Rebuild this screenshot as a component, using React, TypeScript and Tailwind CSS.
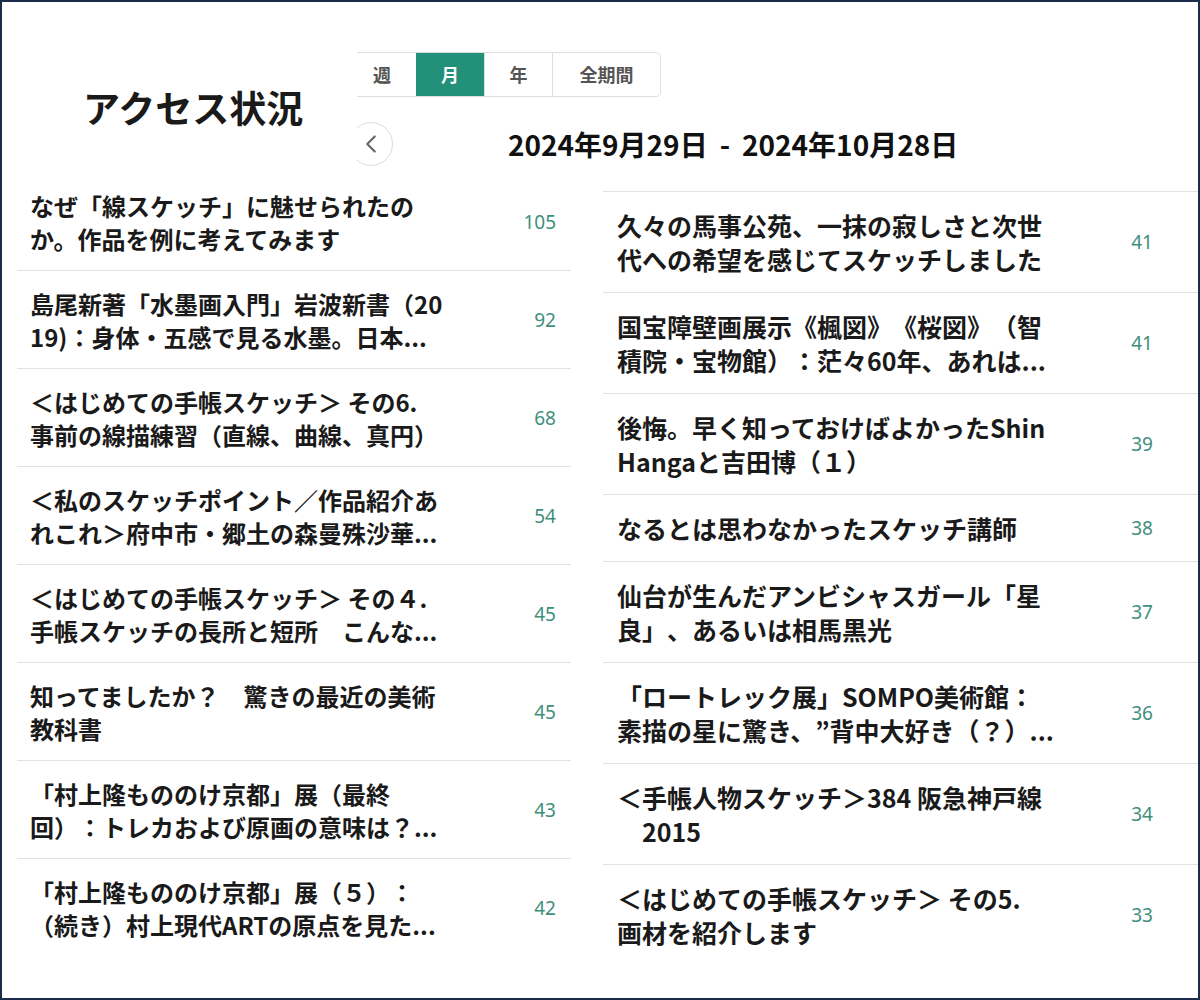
import { ChevronLeft } from "lucide-react";

type Item = { lines: string[]; count: number };

const leftItems: Item[] = [
    { lines: ["なぜ「線スケッチ」に魅せられたの", "か。作品を例に考えてみます"], count: 105 },
    { lines: ["島尾新著「水墨画入門」岩波新書（20", "19)：身体・五感で見る水墨。日本..."], count: 92 },
    { lines: ["＜はじめての手帳スケッチ＞ その6.", "事前の線描練習（直線、曲線、真円）"], count: 68 },
    { lines: ["＜私のスケッチポイント／作品紹介あ", "れこれ＞府中市・郷土の森曼殊沙華..."], count: 54 },
    { lines: ["＜はじめての手帳スケッチ＞ その４.", "手帳スケッチの長所と短所　こんな..."], count: 45 },
    { lines: ["知ってましたか？　驚きの最近の美術", "教科書"], count: 45 },
    { lines: ["「村上隆もののけ京都」展（最終", "回）：トレカおよび原画の意味は？..."], count: 43 },
    { lines: ["「村上隆もののけ京都」展（５）：", "（続き）村上現代ARTの原点を見た..."], count: 42 },
];

const rightItems: Item[] = [
    { lines: ["久々の馬事公苑、一抹の寂しさと次世", "代への希望を感じてスケッチしました"], count: 41 },
    { lines: ["国宝障壁画展示《楓図》《桜図》（智", "積院・宝物館）：茫々60年、あれは..."], count: 41 },
    { lines: ["後悔。早く知っておけばよかったShin", "Hangaと吉田博（１）"], count: 39 },
    { lines: ["なるとは思わなかったスケッチ講師"], count: 38 },
    { lines: ["仙台が生んだアンビシャスガール「星", "良」、あるいは相馬黒光"], count: 37 },
    { lines: ["「ロートレック展」SOMPO美術館：", "素描の星に驚き、”背中大好き（？）..."], count: 36 },
    { lines: ["＜手帳人物スケッチ＞384 阪急神戸線", "　2015"], count: 34 },
    { lines: ["＜はじめての手帳スケッチ＞ その5.", "画材を紹介します"], count: 33 },
];

const tabs = [
    { label: "週", w: "w-[68px]" },
    { label: "月", w: "w-[68px]" },
    { label: "年", w: "w-[68px]" },
    { label: "全期間", w: "w-[108px]" },
];

function App() {
    return (
        <div className="w-[1200px] h-[1000px] border-2 border-[#1c2b4a] bg-white overflow-hidden font-['Noto_Sans_CJK_JP','Noto_Sans',sans-serif] text-[#1a1a1a] [text-spacing-trim:space-all]">
            {/* header */}
            <div className="h-[171px] flex">
                <div className="w-[355px] shrink-0 pl-[81px] pt-[87px]">
                    <h1 className="text-[37px] leading-[37px] font-bold">アクセス状況</h1>
                </div>
                <div className="flex-1 overflow-hidden">
                    <div className="flex -ml-[10px] mt-[50px] w-fit border border-[#dedede] rounded-r-[5px] h-[45px]">
                        {tabs.map((t, i) => (
                            <div
                                key={t.label}
                                className={`${t.w} flex items-center justify-center text-[18px] font-bold ${i === 1 ? "bg-[#23907a] text-white" : "text-[#555]"} ${i > 1 ? "border-l border-[#dedede]" : ""}`}
                            >
                                {t.label}
                            </div>
                        ))}
                    </div>
                    <div className="flex items-center mt-[25px] -ml-[8px]">
                        <div className="w-[44px] h-[44px] rounded-full border border-[#dcdcdc] flex items-center justify-center text-[#666]">
                            <ChevronLeft size={30} strokeWidth={1.7} />
                        </div>
                        <div className="ml-[115px] text-[28px] leading-[36px] font-bold text-[#111] flex">
                            <span>2024年9月29日</span>
                            <span className="mx-[12px]">-</span>
                            <span>2024年10月28日</span>
                        </div>
                    </div>
                </div>
            </div>

            {/* lists */}
            <div className="flex">
                <div className="ml-[15px] w-[554px] shrink-0">
                    {leftItems.map((it, i) => (
                        <div
                            key={i}
                            className={`flex items-center pl-[13px] pr-[15px] pt-[16px] pb-[15px] ${i < leftItems.length - 1 ? "border-b border-[#e2e2e2]" : ""}`}
                        >
                            <div className="flex-1 text-[24px] leading-[33px] font-bold whitespace-nowrap">
                                {it.lines.map((l, j) => (
                                    <div key={j}>{l}</div>
                                ))}
                            </div>
                            <div className="text-[19px] text-[#3f8f7b] font-['Noto_Sans',sans-serif]">{it.count}</div>
                        </div>
                    ))}
                </div>
                <div className="ml-[32px] flex-1 mt-[18px]">
                    {rightItems.map((it, i) => (
                        <div key={i} className="flex items-center pl-[14px] pr-[45px] py-[16px] border-t border-[#e2e2e2]">
                            <div className="flex-1 text-[25px] leading-[34px] font-bold whitespace-nowrap">
                                {it.lines.map((l, j) => (
                                    <div key={j}>{l}</div>
                                ))}
                            </div>
                            <div className="text-[19px] text-[#3f8f7b] font-['Noto_Sans',sans-serif]">{it.count}</div>
                        </div>
                    ))}
                </div>
            </div>
        </div>
    );
}

export default App;
